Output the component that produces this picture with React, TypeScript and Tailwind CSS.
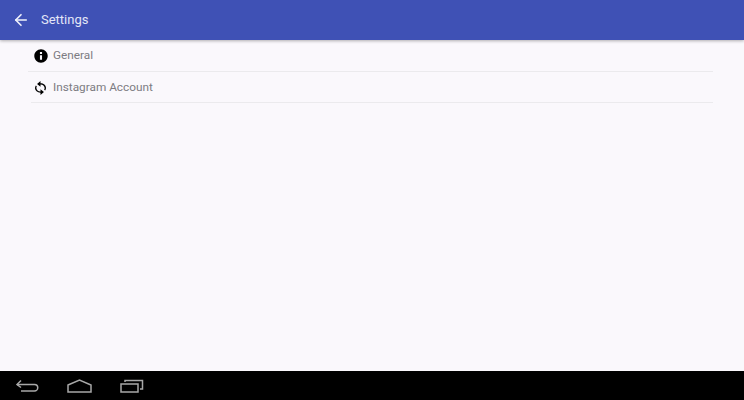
import { ArrowLeft } from "lucide-react";

function InfoIcon() {
  return (
    <svg width="14" height="14" viewBox="0 0 24 24" fill="#000">
      <path d="M12 0.5C5.65 0.5 0.5 5.65 0.5 12S5.65 23.5 12 23.5 23.5 18.35 23.5 12 18.35 0.5 12 0.5zM13.8 18.5h-3.6v-8h3.6zM13.8 8.4h-3.6V5.2h3.6z" />
    </svg>
  );
}

function SyncIcon() {
  return (
    <svg width="11" height="14" viewBox="2 0 16 24" preserveAspectRatio="none" fill="#000">
      <path d="M10 4V0L5 5l5 5V6c3.31 0 6 2.69 6 6 0 1.01-.25 1.97-.7 2.8l1.46 1.46C17.54 15.03 18 13.57 18 12c0-4.42-3.58-8-8-8zm0 14c-3.31 0-6-2.69-6-6 0-1.01.25-1.97.7-2.8L3.24 7.74C2.46 8.97 2 10.43 2 12c0 4.42 3.58 8 8 8v4l5-5-5-5v4z" />
    </svg>
  );
}

const rows = [
  { label: "General", icon: <InfoIcon />, box: "h-[32px] -ml-[3px] pl-[5px]" },
  { label: "Instagram Account", icon: <SyncIcon />, box: "h-[31px] pt-[1px] pl-[2px]" },
];

export default function App() {
  return (
    <div className="flex h-[400px] w-[744px] flex-col overflow-hidden bg-[#faf8fc] font-['Roboto',sans-serif]">
      {/* Toolbar */}
      <header className="z-10 flex h-[40px] shrink-0 items-center bg-[#3f51b5] pl-[12px] shadow-[0_1px_3px_rgba(0,0,0,0.3)]">
        <ArrowLeft size={18} strokeWidth={2.2} className="text-[#f1f3fb]" />
        <span className="ml-[11px] text-[13px] text-[#e3e6f7]">Settings</span>
      </header>

      {/* Settings list */}
      <main className="flex-1 pr-[31px] pl-[31px]">
        {rows.map((row) => (
          <div
            key={row.label}
            className={`flex items-center border-b border-[#ebeaed] ${row.box}`}
          >
            <span className="flex w-[15px] justify-center">{row.icon}</span>
            <span className="ml-[5px] text-[11.8px] text-[#7d7c82]">{row.label}</span>
          </div>
        ))}
      </main>

      {/* Navigation bar */}
      <footer className="flex h-[29px] shrink-0 items-center bg-black pl-[16px] text-[#a8a8a8]">
        <svg width="23" height="14" viewBox="0 0 23 14" fill="none" stroke="currentColor" strokeWidth="1.5">
          <path d="M1 5.5h17.5a3 3 0 0 1 0 6.5H5" />
          <path d="M5 1.5L1 5.5l4 3" />
        </svg>
        <svg className="ml-[28px]" width="25" height="14" viewBox="0 0 25 14" fill="none" stroke="currentColor" strokeWidth="1.5">
          <path d="M1 6L12.5 1 24 6v7H1z" />
        </svg>
        <svg className="ml-[28px]" width="24" height="14" viewBox="0 0 24 14" fill="none" stroke="currentColor" strokeWidth="1.5">
          <rect x="1" y="5" width="17" height="8" />
          <path d="M5 3V1.5h17.5V10H20" />
        </svg>
      </footer>
    </div>
  );
}
